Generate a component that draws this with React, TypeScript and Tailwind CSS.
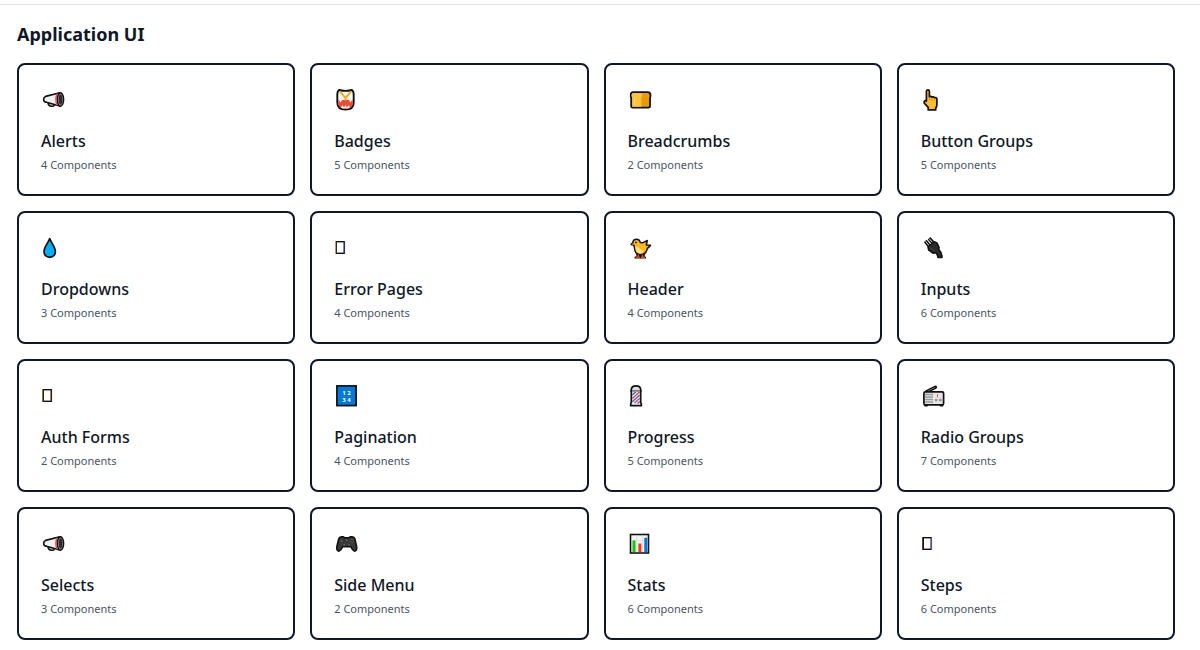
import React from 'react';

const Megaphone = () => (
  <svg viewBox="0 0 24 24" className="h-6 w-6" aria-hidden="true">
    <path d="M7 15.200c.4 2.600 1.800 3 3.400 3h1.800c.8 0 1-.8 1-1.600" fill="#d6d6d6" stroke="#111" strokeWidth="1.600" />
    <path d="M18.800 4.800 4.600 8.400C3.200 8.800 2.700 9.800 2.700 11.200s.6 2.600 1.900 2.900l14.200 4z" fill="#f0f0f0" stroke="#111" strokeWidth="1.600" strokeLinejoin="round" />
    <ellipse cx="19.400" cy="11.500" rx="3.200" ry="6.700" fill="#8a8a8a" stroke="#111" strokeWidth="1.500" />
    <ellipse cx="19.500" cy="11.500" rx="1.700" ry="4.900" fill="#2b2b2b" />
    <path d="M16.300 5.800c-1.900 2.400-1.900 9.200 0 11.400" fill="none" stroke="#ee4553" strokeWidth="1.400" />
  </svg>
);

const Badge = () => (
  <svg viewBox="0 0 24 24" className="h-6 w-6" aria-hidden="true">
    <path d="M5 2c3 1.200 10 1.200 13 0 1.200.8 1.700 2.600 1.700 4.800v7.400c0 4.800-2.400 7.400-8.200 7.400s-8.200-2.600-8.200-7.400V6.800C3.300 4.600 3.800 2.800 5 2z" fill="#f7f7f7" stroke="#111" strokeWidth="1.900" strokeLinejoin="round" />
    <path d="M4.200 12h14.600v2.200c0 4.200-2.200 6.600-7.300 6.600s-7.300-2.400-7.300-6.600z" fill="#f04a35" />
    <path d="m6 3.600 5.500 6.400L17 3.600M11.500 10v2.500" fill="none" stroke="#f3ac19" strokeWidth="2" />
    <path d="m5 12 1.500 2.400L8 12zM15 12l1.500 2.400L18 12zM7 19.500l1.500-2.300 1.500 2.300 1.500-2.300 1.500 2.300 1.500-2.300 1.500 2.300-1.500.8h-6z" fill="#fff" />
  </svg>
);

const Bread = () => (
  <svg viewBox="0 0 24 24" className="h-6 w-6" aria-hidden="true">
    <path d="M5.200 4.200h14.400c1.900 0 2.900 1.400 2.900 3.200 0 1.200-.2 1.900-.5 2.500v8.200c0 1-.6 1.600-1.600 1.600H4.800c-1 0-1.600-.6-1.600-1.600V9.900c-.3-.6-.5-1.300-.5-2.500 0-1.800.8-3.200 2.500-3.200z" fill="#e99a06" stroke="#111" strokeWidth="1.800" strokeLinejoin="round" />
    <path d="M5.300 5.100h6.700c1.600 0 2.300 1 2.300 2.300 0 1-.4 1.700-.9 2.100v9.300H4.200V9.500c-.4-.4-.6-1.100-.6-2.100 0-1.300.6-2.300 1.700-2.300z" fill="#ffc23a" />
    <path d="M6.500 9v7.500" stroke="#ffd97a" strokeWidth="1.200" />
  </svg>
);

const PointingHand = () => (
  <svg viewBox="0 0 24 24" className="h-6 w-6" aria-hidden="true">
    <path d="M5.400 3.400c0-1 .6-1.600 1.500-1.600s1.500.6 1.500 1.600v5.300c.8-.5 2-.4 2.500.4.900-.5 2-.3 2.500.6 1.400-.5 2.500.2 2.500 1.700v5.200c0 1.600-.6 2.800-1.200 3.500v1.800H7.200v-2.500l-3.700-4c-.6-.8-.6-1.900.1-2.400.6-.5 1.300-.3 1.800.2z" fill="#fdbf2d" stroke="#111" strokeWidth="1.700" strokeLinejoin="round" />
    <path d="M8.600 9.500v2.500M11 10v2.500M13.400 10.600v2" stroke="#b87a08" strokeWidth=".7" />
  </svg>
);

const Droplet = () => (
  <svg viewBox="0 0 24 24" className="h-6 w-6" aria-hidden="true">
    <path d="M8.700 2.600C7.400 6.600 3 11 3 15.600c0 3.400 2.400 5.700 5.700 5.700s5.700-2.300 5.700-5.700c0-4.600-4.400-9-5.700-13z" fill="#00b0f0" stroke="#111" strokeWidth="1.700" strokeLinejoin="round" />
  </svg>
);

const EmptyGlyph = ({ left, right }: { left: string; right: string }) => (
  <svg viewBox="0 0 24 24" className="h-6 w-6" aria-hidden="true">
    <rect x="1.500" y="5" width="9.500" height="13" fill="#111" />
    <rect x="3" y="6.400" width="6.500" height="10.200" fill="#fff" />
    <path d="M1.700 5v13" stroke={left} strokeWidth=".8" />
    <path d="M10.600 5v13" stroke={right} strokeWidth=".8" />
  </svg>
);

const Chick = () => (
  <svg viewBox="0 0 24 24" className="h-6 w-6" aria-hidden="true">
    <path d="M8 17.500h9.500l-1 2.500 1.500 1v1.500H6.500V21l2-1z" fill="#111" />
    <path d="M4.700 6.800C5 4.300 6.500 3.200 8.500 3.200c2.300 0 3.500 1.500 3.800 3.300l2.300.3 4.700-2.300-1 4.500 4.200.2c-1 1.400-2 2.300-3.100 3.200-.8 3.600-3 6.300-6.700 6.300-4.500 0-6-3.200-6.200-6.400-.1-1.200-.4-2.300-.9-3.200l-2.500-.5z" fill="#ffb81c" stroke="#111" strokeWidth="1.500" strokeLinejoin="round" />
    <path d="M7.400 11c1.800-.8 3.300 0 4.400 1.500 1 1.300 2.200 2 3.800 2-1 2-2.200 3-4 2.800-2.700-.3-4.100-2.700-4.200-6.300z" fill="#ffe08a" />
    <path d="m3.200 8.800 2.200-1.700.6 2z" fill="#e8501c" />
    <circle cx="8" cy="6.400" r=".9" fill="#111" />
    <path d="M10.300 18.600v2M14.500 18.600v2M7.800 21.200h4M13 21.200h4" stroke="#d9480f" strokeWidth="1.500" />
  </svg>
);

const Plug = () => (
  <svg viewBox="0 0 24 24" className="h-6 w-6" aria-hidden="true">
    <path d="m4.300 5 4.500 5.500M8 2.300l4.700 5.200" stroke="#111" strokeWidth="3.600" />
    <path d="m4.600 5.400 3.500 4.200M8.200 2.700l3.600 4.200" stroke="#ddd" strokeWidth="1" />
    <path d="m13 5.800-6 5.200.8 3.200 4.200 3 2.800-.4c1.400 1.400 2 2.500 2.200 4.700h4c0-3.300-1-5.700-3.200-7.800l.2-2.700-2-4z" fill="#2b2b2b" stroke="#111" strokeWidth="1.600" strokeLinejoin="round" />
    <path d="m9 11.500 4 3" stroke="#444" strokeWidth="1" />
  </svg>
);

const Numbers = () => (
  <svg viewBox="0 0 24 24" className="h-6 w-6" aria-hidden="true">
    <rect x="2.900" y="1.900" width="19.200" height="19.700" fill="#0078d7" stroke="#111" strokeWidth="1.700" />
    <g fill="#fff" fontFamily="Open Sans, sans-serif" fontSize="6" fontWeight="700" textAnchor="middle">
      <text x="10" y="11">1</text>
      <text x="15" y="11">2</text>
      <text x="10" y="18">3</text>
      <text x="15" y="18">4</text>
    </g>
  </svg>
);

const BarberPole = () => (
  <svg viewBox="0 0 24 24" className="h-6 w-6" aria-hidden="true">
    <path d="M3.300 7V5.800c0-2.400 1.900-4 4.700-4s4.700 1.600 4.700 4V7z" fill="#dedede" stroke="#111" strokeWidth="1.700" />
    <path d="M3.300 6.800h9.400v12l.6.800v2H2.700v-2l.6-.8z" fill="#f2f2f2" stroke="#111" strokeWidth="1.700" />
    <path d="m4.200 11 3.800-3.400M4.200 17.800l7.600-6.800" stroke="#2f6fed" strokeWidth="1.500" />
    <path d="m4.200 14.500 7.600-6.800M6.500 19l5.300-4.800" stroke="#ef4b2d" strokeWidth="1.500" />
    <path d="m9.500 19.500 2.300-2" stroke="#2f6fed" strokeWidth="1.300" />
    <path d="M4 7h8" stroke="#c8c8c8" strokeWidth="1.200" />
  </svg>
);

const Radio = () => (
  <svg viewBox="0 0 24 24" className="h-6 w-6" aria-hidden="true">
    <path d="M5.500 7.700 14.400 3.200" stroke="#111" strokeWidth="3.400" strokeLinecap="round" />
    <path d="M6.500 7.300 14.200 3.300" stroke="#777" strokeWidth=".9" />
    <path d="M5 20.500v2M20.500 20.500v2" stroke="#111" strokeWidth="3.400" />
    <rect x="2.900" y="7.900" width="19.700" height="13" rx="1.500" fill="#e6e6e6" stroke="#111" strokeWidth="1.700" />
    <path d="M4 10.500h8M4 13h8M4 15.500h8M4 18h8" stroke="#999" strokeWidth="1.400" />
    <path d="M16.500 10.200v3" stroke="#ee5a30" strokeWidth="1" />
    <circle cx="15.200" cy="16" r="1.500" fill="#999" />
    <circle cx="19.400" cy="16" r="1.500" fill="#999" />
  </svg>
);

const Gamepad = () => (
  <svg viewBox="0 0 24 24" className="h-6 w-6" aria-hidden="true">
    <path d="M7.400 4.800h2l1 .9h4.800l1-.9h2c1.300 0 2.300.8 2.700 2.200l1.700 7.400c.6 2.800-.3 4.700-1.700 4.700-1.600 0-2.800-1.600-4-4.300H8.600c-1.200 2.700-2.400 4.300-4 4.300-1.400 0-2.300-1.900-1.700-4.700L4.700 7c.4-1.400 1.400-2.200 2.700-2.200z" fill="#383838" stroke="#111" strokeWidth="1.600" strokeLinejoin="round" />
    <circle cx="7.500" cy="9" r="1" fill="#666" />
    <circle cx="10.300" cy="12.600" r=".9" fill="#666" />
    <circle cx="15.300" cy="12.600" r=".9" fill="#666" />
    <circle cx="12.800" cy="8.300" r=".7" fill="#888" />
    <circle cx="18" cy="7.300" r=".6" fill="#a87c1c" />
    <circle cx="19.500" cy="8.900" r=".6" fill="#a83b2d" />
    <circle cx="16.500" cy="8.900" r=".6" fill="#2a5f96" />
    <circle cx="18" cy="10.500" r=".6" fill="#2e8b3a" />
  </svg>
);

const BarChart = () => (
  <svg viewBox="0 0 24 24" className="h-6 w-6" aria-hidden="true">
    <rect x="2.500" y="2.500" width="18" height="18.500" fill="#f2f2f2" stroke="#111" strokeWidth="1.600" />
    <path d="M3.300 8.500h16.400M3.300 14.500h16.400M8.500 3.300v16.900M14.500 3.300v16.900" stroke="#d6d6d6" strokeWidth=".6" />
    <path d="M6 8.500v11.700" stroke="#16c60c" strokeWidth="3" />
    <path d="M11.900 11.500v8.700" stroke="#f03a17" strokeWidth="3" />
    <path d="M17.800 5.800v14.400" stroke="#0078d7" strokeWidth="3" />
  </svg>
);

const collections = [
  { name: 'Alerts', count: 4, icon: <Megaphone /> },
  { name: 'Badges', count: 5, icon: <Badge /> },
  { name: 'Breadcrumbs', count: 2, icon: <Bread /> },
  { name: 'Button Groups', count: 5, icon: <PointingHand /> },
  { name: 'Dropdowns', count: 3, icon: <Droplet /> },
  { name: 'Error Pages', count: 4, icon: <EmptyGlyph left="#d9a37c" right="#2a3a9c" /> },
  { name: 'Header', count: 4, icon: <Chick /> },
  { name: 'Inputs', count: 6, icon: <Plug /> },
  { name: 'Auth Forms', count: 2, icon: <EmptyGlyph left="#a5661f" right="#5a2010" /> },
  { name: 'Pagination', count: 4, icon: <Numbers /> },
  { name: 'Progress', count: 5, icon: <BarberPole /> },
  { name: 'Radio Groups', count: 7, icon: <Radio /> },
  { name: 'Selects', count: 3, icon: <Megaphone /> },
  { name: 'Side Menu', count: 2, icon: <Gamepad /> },
  { name: 'Stats', count: 6, icon: <BarChart /> },
  { name: 'Steps', count: 6, icon: <EmptyGlyph left="#4b1c14" right="#5f75bd" /> },
];

export default function App() {
  return (
    <div className="min-h-screen bg-white font-['Noto_Sans','Open_Sans',sans-serif] text-gray-900">
      <header className="h-[5px] border-b border-gray-200" />

      <main className="pt-[15px] pr-[25px] pb-[10px] pl-[17px]">
        <h1 className="text-lg leading-7 font-bold">Application UI</h1>

        <ul className="mt-[15px] grid grid-cols-1 gap-[15px] sm:grid-cols-2 lg:grid-cols-4">
          {collections.map((item) => (
            <li key={item.name}>
              <a href="#" className="block rounded-lg border-2 border-gray-900 px-[22px] pt-[23px] pb-[21px]">
                {item.icon}
                <h2 className="mt-4 text-base leading-[26px] font-medium">{item.name}</h2>
                <p className="mt-[3px] text-[11px] leading-4 text-gray-600">{item.count} Components</p>
              </a>
            </li>
          ))}
        </ul>
      </main>
    </div>
  );
}
